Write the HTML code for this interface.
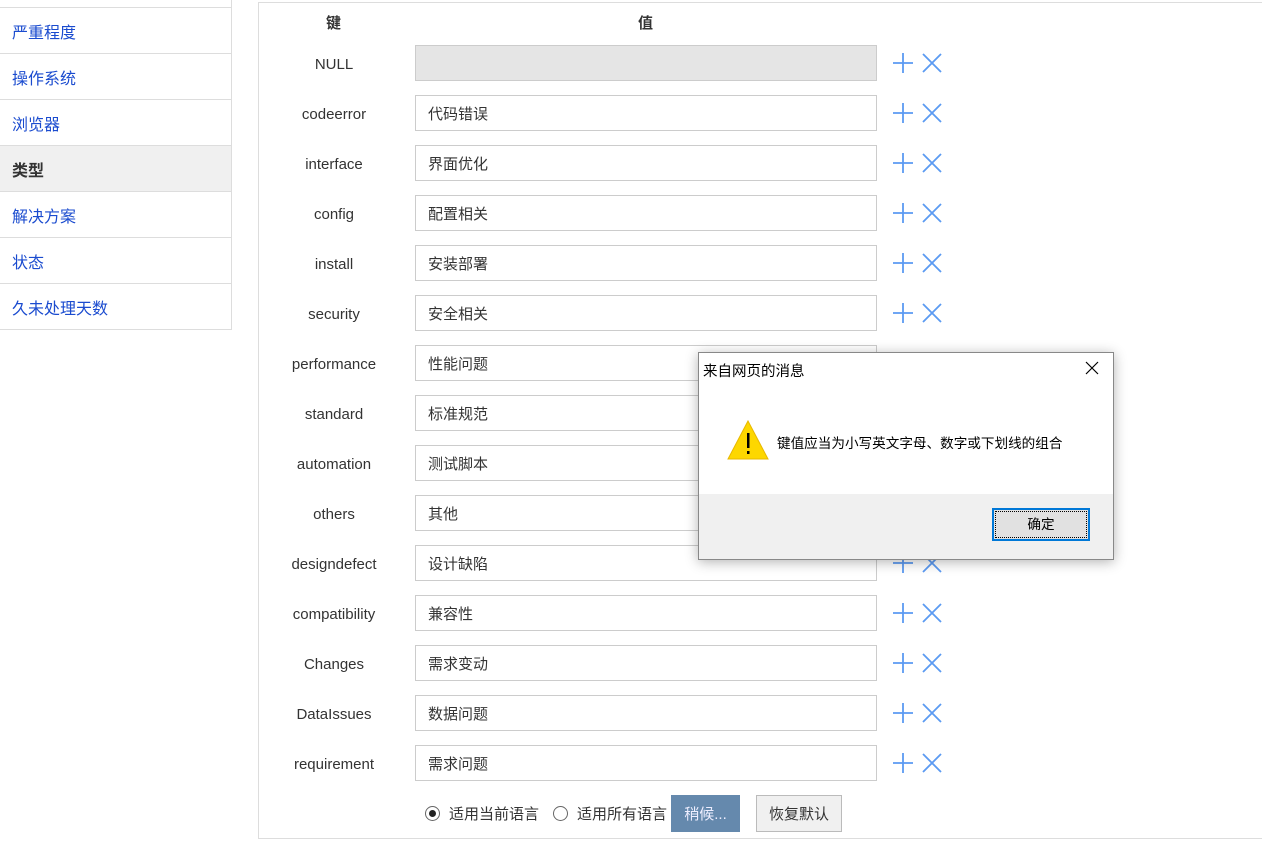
<!DOCTYPE html>
<html><head><meta charset="utf-8"><style>
*{box-sizing:border-box;margin:0;padding:0}
body{width:1262px;height:858px;background:#fff;font-family:"Liberation Sans","Noto Sans CJK SC",sans-serif;font-size:14px;color:#333;position:relative;overflow:hidden}
.side{position:absolute;left:0;top:0;width:232px;border-right:1px solid #ddd}
.side div{height:46px;border-bottom:1px solid #ddd;padding-left:12px;display:flex;align-items:center;color:#1a4bcf;font-size:16px}
.side .act{background:#f0f0f0;color:#333;font-weight:bold}
.main{position:absolute;left:258px;top:2px;width:1010px;height:837px;border:1px solid #ddd;border-right:none}
.hd{position:absolute;top:9px;font-weight:bold;font-size:15px}
.row{position:absolute;left:0;height:36px;width:700px}
.k{position:absolute;left:0;top:1px;width:150px;height:36px;display:flex;align-items:center;justify-content:center;font-size:15px;color:#333}
.v{position:absolute;left:156px;top:0;width:462px;height:36px;border:1px solid #ccc;display:flex;align-items:center;padding-left:12px;font-size:15px}
.ic{position:absolute;left:632px;top:7px}
.dlg{position:absolute;left:698px;top:352px;width:416px;height:208px;border:1px solid #888;background:#fff;box-shadow:0 2px 12px rgba(0,0,0,.3);font-size:13.6px;color:#000}
.ft{position:absolute;left:0;right:0;bottom:0;height:65px;background:#f0f0f0}
.btn{position:absolute;left:293px;top:14px;width:98px;height:33px;border:2px solid #0078d7;background:#e1e1e1;text-align:center;line-height:29px;outline:1px dotted #000;outline-offset:-4px}
</style></head><body>
<div class="side" style="top:7px;border-top:1px solid #ddd">
<div>严重程度</div><div>操作系统</div><div>浏览器</div><div class="act">类型</div><div>解决方案</div><div>状态</div><div>久未处理天数</div>
</div>
<div style="position:absolute;left:0;top:0;width:232px;height:7px;border-right:1px solid #ddd"></div>
<div class="main">
<div class="hd" style="left:67px">键</div>
<div class="hd" style="left:379px">值</div>
<div id="rows"></div>
<div style="position:absolute;left:166px;top:803px;width:15px;height:15px;border:1px solid #666;border-radius:50%"><div style="width:7px;height:7px;background:#222;border-radius:50%;margin:3px"></div></div>
<div style="position:absolute;left:190px;top:800px;font-size:15px">适用当前语言</div>
<div style="position:absolute;left:294px;top:803px;width:15px;height:15px;border:1px solid #666;border-radius:50%"></div>
<div style="position:absolute;left:318px;top:800px;font-size:15px">适用所有语言</div>
<div style="position:absolute;left:412px;top:792px;width:69px;height:37px;background:#6589ad;color:#eef;display:flex;align-items:center;justify-content:center;font-size:15px">稍候...</div>
<div style="position:absolute;left:497px;top:792px;width:86px;height:37px;background:#f0f0f0;border:1px solid #bbb;display:flex;align-items:center;justify-content:center;font-size:15px">恢复默认</div>
</div>
<div class="dlg">
<div style="position:absolute;left:4px;top:7px;font-size:14.5px">来自网页的消息</div>
<svg style="position:absolute;left:386px;top:8px" width="14" height="14"><path d="M1 1L13 13M13 1L1 13" stroke="#000" stroke-width="1.2"/></svg>
<svg style="position:absolute;left:28px;top:66px" width="42" height="42"><path d="M21 2L41 40H1Z" fill="#fdd700" stroke="#e8b800"/><rect x="20" y="14" width="2.5" height="15" fill="#000"/><rect x="20" y="32" width="2.5" height="3" fill="#000"/></svg>
<div style="position:absolute;left:78px;top:79px">键值应当为小写英文字母、数字或下划线的组合</div>
<div class="ft"><div class="btn">确定</div></div>
</div>
<script>
var d=[["NULL",""],["codeerror","代码错误"],["interface","界面优化"],["config","配置相关"],["install","安装部署"],["security","安全相关"],["performance","性能问题"],["standard","标准规范"],["automation","测试脚本"],["others","其他"],["designdefect","设计缺陷"],["compatibility","兼容性"],["Changes","需求变动"],["DataIssues","数据问题"],["requirement","需求问题"]];
var h="";d.forEach(function(r,i){h+='<div class="row" style="top:'+(42+50*i)+'px"><div class="k">'+r[0]+'</div><div class="v"'+(i==0?' style="background:#e5e5e5"':'')+'>'+r[1]+'</div><svg class="ic" width="52" height="22"><path d="M2 11H22M12 1V21" stroke="#5b9af2" stroke-width="1.8"/><path d="M32 2L50 20M50 2L32 20" stroke="#5b9af2" stroke-width="1.8"/></svg></div>'});
document.getElementById("rows").innerHTML=h;
</script>
</body></html>
